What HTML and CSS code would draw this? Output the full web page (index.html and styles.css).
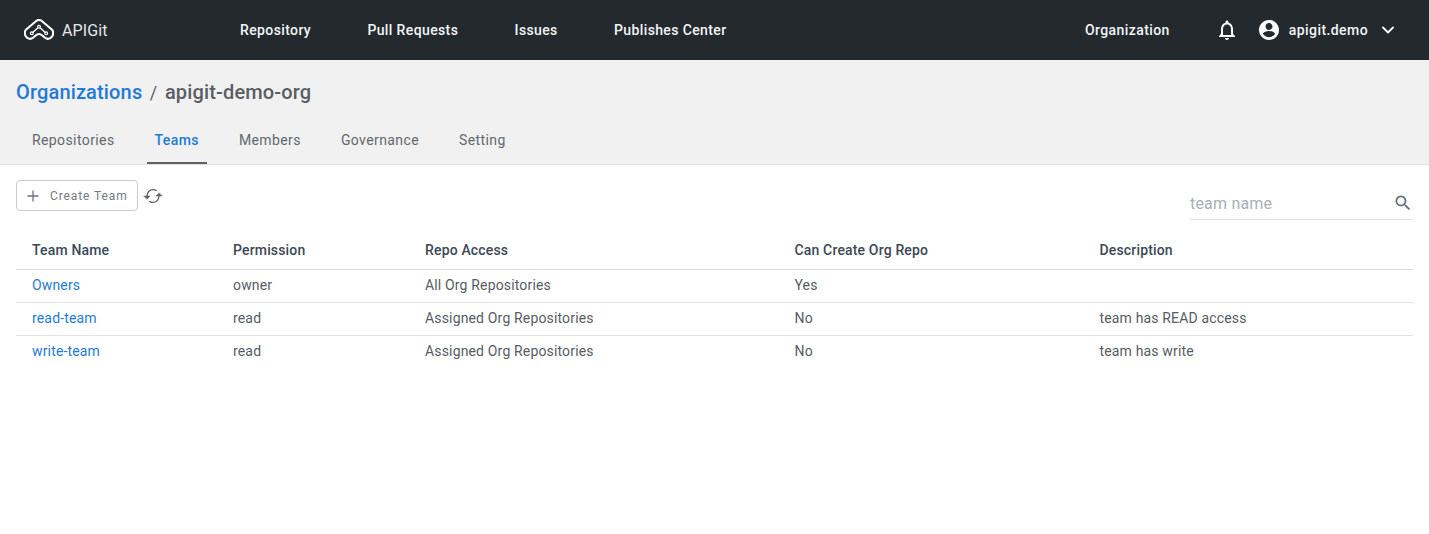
FILE: index.html
```html
<!DOCTYPE html>
<html lang="en">
<head>
<meta charset="utf-8">
<title>APIGit</title>
<link rel="stylesheet" href="styles.css">
</head>
<body>
<header class="topbar">
  <a class="brand">
    <svg class="logo" viewBox="0 0 30 22" fill="none" stroke="#fff" stroke-width="2.1" stroke-linejoin="round" stroke-linecap="round">
      <path d="M12.500 1.800 2.200 10.500C.4 12 .4 15.500 2 17.700c2 2.500 5 2.700 7 1.100l3-2.600c1.700-1.400 4.300-1.400 6 0l3 2.600c2 1.600 5 1.400 7-1.100 1.600-2.200 1.600-5.700-.2-7.200L17.500 1.800c-1.500-1.200-3.500-1.200-5 0z"/>
      <path d="M9 13.200 13.400 9.200M21 13.200 16.600 9.200" stroke-width="1.300"/>
      <circle cx="7.800" cy="14.300" r="1.400" stroke-width="1.200"/>
      <circle cx="22.200" cy="14.300" r="1.400" stroke-width="1.200"/>
      <circle cx="15" cy="7.800" r="1.400" stroke-width="1.200"/>
    </svg>
    <span class="brand-name">APIGit</span>
  </a>
  <nav class="mainnav">
    <a>Repository</a>
    <a>Pull Requests</a>
    <a>Issues</a>
    <a>Publishes Center</a>
  </nav>
  <div class="right">
    <a class="org-link">Organization</a>
    <svg class="bell" viewBox="0 0 24 24" fill="#fff"><path d="M12 22c1.100 0 2-.9 2-2h-4c0 1.100.9 2 2 2zm6-6v-5c0-3.070-1.630-5.640-4.500-6.320V4c0-.83-.67-1.500-1.500-1.500s-1.500.67-1.500 1.500v.68C7.640 5.360 6 7.920 6 11v5l-2 2v1h16v-1l-2-2zm-2 1H8v-6c0-2.480 1.510-4.500 4-4.500s4 2.020 4 4.500v6z"/></svg>
    <svg class="avatar" viewBox="0 0 24 24" fill="#fff"><path d="M12 2C6.480 2 2 6.480 2 12s4.480 10 10 10 10-4.480 10-10S17.520 2 12 2zm0 3c1.930 0 3.500 1.570 3.500 3.500S13.930 12 12 12s-3.500-1.570-3.500-3.500S10.070 5 12 5zm0 14.200c-2.500 0-4.710-1.280-6-3.220.03-1.990 4-3.080 6-3.080s5.970 1.090 6 3.080c-1.290 1.940-3.500 3.220-6 3.220z"/></svg>
    <span class="username">apigit.demo</span>
    <svg class="chev" viewBox="0 0 12 8" fill="none" stroke="#fff" stroke-width="1.800" stroke-linecap="round" stroke-linejoin="round"><path d="M1 1.500 6 6.500l5-5"/></svg>
  </div>
</header>

<section class="subhead">
  <div class="crumbs">
    <a class="crumb-link">Organizations</a>
    <span class="crumb-sep">/</span>
    <span class="crumb-current">apigit-demo-org</span>
  </div>
  <nav class="tabs">
    <a class="tab">Repositories</a>
    <a class="tab active">Teams</a>
    <a class="tab">Members</a>
    <a class="tab">Governance</a>
    <a class="tab">Setting</a>
  </nav>
</section>

<main class="content">
  <div class="toolbar">
    <div class="actions">
      <button class="create-btn">
        <svg class="plus" viewBox="0 0 12 12" stroke="#6b7280" stroke-width="1.300"><path d="M6 .5v11M.5 6h11"/></svg>
        <span>Create Team</span>
      </button>
      <svg class="refresh" viewBox="0 0 20 20" fill="none" stroke="#5f6368" stroke-width="1.400" stroke-linecap="round" stroke-linejoin="round">
        <path d="M4 10C4.500 6 7 3.600 10 3.600c1.100 0 2.200.2 3.200.8"/>
        <path d="M16 10c-.5 4-3 6.400-6 6.400-1.100 0-2.200-.2-3.200-.8"/>
        <path d="M1 10h6l-3 3zM19 10h-6l3-3z" fill="#5f6368" stroke-width="0.500"/>
      </svg>
    </div>
    <div class="search">
      <span class="placeholder">team name</span>
      <svg class="search-icon" viewBox="0 0 24 24" fill="#5f6b76"><path d="M15.500 14h-.79l-.28-.27A6.471 6.471 0 0 0 16 9.500 6.500 6.500 0 1 0 9.500 16c1.610 0 3.090-.59 4.230-1.570l.27.28v.79l5 4.990L20.490 19l-4.990-5zm-6 0C7.010 14 5 11.990 5 9.500S7.010 5 9.500 5 14 7.010 14 9.500 11.990 14 9.500 14z"/></svg>
    </div>
  </div>
  <table class="teams">
    <colgroup>
      <col class="c1"><col class="c2"><col class="c3"><col class="c4"><col class="c5">
    </colgroup>
    <thead>
      <tr><th>Team Name</th><th>Permission</th><th>Repo Access</th><th>Can Create Org Repo</th><th>Description</th></tr>
    </thead>
    <tbody>
      <tr><td><a class="link">Owners</a></td><td>owner</td><td>All Org Repositories</td><td>Yes</td><td></td></tr>
      <tr><td><a class="link">read-team</a></td><td>read</td><td>Assigned Org Repositories</td><td>No</td><td>team has READ access</td></tr>
      <tr><td><a class="link">write-team</a></td><td>read</td><td>Assigned Org Repositories</td><td>No</td><td>team has write</td></tr>
    </tbody>
  </table>
</main>
</body>
</html>
```

FILE: styles.css
```css
* { box-sizing: border-box; }
html, body { margin: 0; padding: 0; background: #fff; }
body { font-family: Roboto, "Liberation Sans", sans-serif; color: #3f4650; height: 534px; overflow: hidden; }

.topbar { height: 60px; background: #24292d; display: flex; align-items: center; padding: 0 35px 0 24px; color: #f3f4f5; }
.brand { display: flex; align-items: center; width: 216px; }
.logo { width: 30px; height: 22px; }
.brand-name { margin-left: 8px; font-size: 16px; letter-spacing: .1px; color: #e4e7ea; }
.mainnav { display: flex; gap: 56.3px; font-size: 14px; font-weight: 500; letter-spacing: .38px; }
.right { margin-left: auto; display: flex; align-items: center; font-size: 14px; font-weight: 500; letter-spacing: .42px; }
.bell { width: 24px; height: 24px; margin-left: 45px; }
.avatar { width: 24px; height: 24px; margin-left: 18px; }
.username { margin-left: 8px; }
.chev { width: 12px; height: 8px; margin-left: 14px; }

.subhead { height: 105px; background: #f1f1f1; border-bottom: 1px solid #dfe1e3; padding: 20px 16px 0; display: flex; flex-direction: column; }
.crumbs { display: flex; align-items: center; height: 24px; font-size: 20px; font-weight: 500; letter-spacing: .15px; }
.crumb-link { color: #1f7ad6; }
.crumb-sep { margin: 0 7.5px; color: #5f6368; font-weight: 400; font-size: 18px; }
.crumb-current { color: #5a5e64; }
.tabs { display: flex; margin: 16px 0 0 8px; gap: 24px; }
.tab { height: 44px; padding: 0 8px 2px; display: flex; align-items: center; justify-content: center; font-size: 14px; letter-spacing: .4px; color: #63686e; border-bottom: 2px solid transparent; }
.tab.active { color: #1f7ad6; font-weight: 500; border-bottom-color: #5f6368; }

.content { padding: 15px 16px 0; }
.toolbar { display: flex; justify-content: space-between; align-items: flex-start; height: 54px; }
.actions { display: flex; align-items: center; gap: 6px; }
.create-btn { width: 122px; height: 31px; display: flex; align-items: center; padding: 0 0 0 10px; background: #fff; border: 1px solid #c6cacf; border-radius: 4px; font-family: inherit; font-size: 12px; letter-spacing: .9px; color: #757b85; }
.plus { width: 12px; height: 12px; margin-right: 11px; }
.refresh { width: 20px; height: 20px; margin-left: -1px; }
.search { width: 223px; height: 40px; border-bottom: 1px solid #dfe1e3; display: flex; align-items: center; justify-content: space-between; padding-top: 7px; }
.placeholder { font-size: 16px; color: #a9afb6; letter-spacing: .2px; }
.search-icon { width: 20px; height: 20px; }

.teams { width: 100%; border-collapse: collapse; table-layout: fixed; font-size: 14px; letter-spacing: .16px; }
.c1 { width: 201px; }
.c2 { width: 192px; }
.c3 { width: 369.500px; }
.c4 { width: 305px; }
th { height: 35px; padding: 0 16px 2px; text-align: left; font-weight: 500; color: #3d4856; border-bottom: 1px solid #d9dcdf; }
td { height: 33px; padding: 0 16px 1px; color: #575c64; border-bottom: 1px solid #e0e2e4; }
tbody tr:last-child td { border-bottom: none; }
.link { color: #1f7ad6; }
```
